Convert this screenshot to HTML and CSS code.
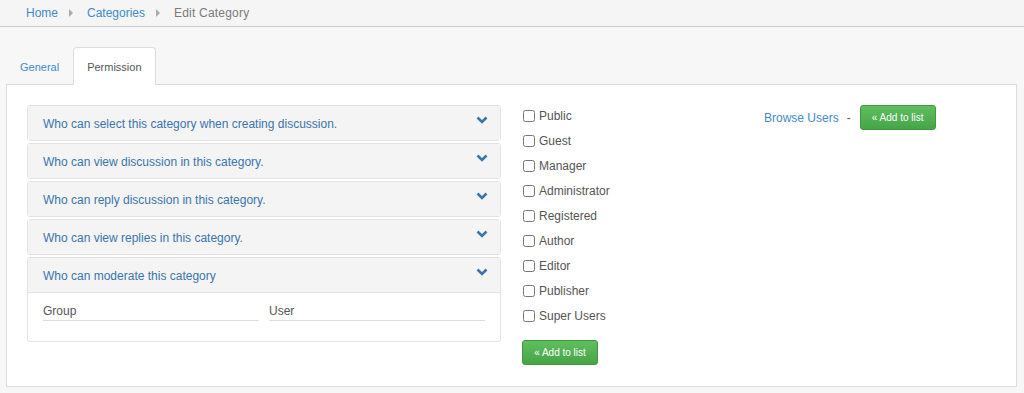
FILE: index.html
```html
<!DOCTYPE html>
<html lang="en">
<head>
    <meta charset="UTF-8">
    <title>Edit Category</title>
    <link rel="stylesheet" href="styles.css">
</head>
<body>
    <div class="breadcrumb">
        <a href="#">Home</a>
        <span class="crumb-arrow"></span>
        <a href="#">Categories</a>
        <span class="crumb-arrow"></span>
        <span class="current">Edit Category</span>
    </div>

    <div class="tabs">
        <a class="tab" href="#">General</a>
        <a class="tab active" href="#">Permission</a>
    </div>

    <div class="tab-panel">
        <div class="accordion">
            <div class="acc-item">
                <div class="acc-head">
                    <span>Who can select this category when creating discussion.</span>
                    <svg class="chevron" width="12" height="8" viewBox="0 0 12 8"><polyline points="1.5,1.5 6,6 10.5,1.5" fill="none" stroke="#3a75ae" stroke-width="2.6"/></svg>
                </div>
            </div>
            <div class="acc-item">
                <div class="acc-head">
                    <span>Who can view discussion in this category.</span>
                    <svg class="chevron" width="12" height="8" viewBox="0 0 12 8"><polyline points="1.5,1.5 6,6 10.5,1.5" fill="none" stroke="#3a75ae" stroke-width="2.6"/></svg>
                </div>
            </div>
            <div class="acc-item">
                <div class="acc-head">
                    <span>Who can reply discussion in this category.</span>
                    <svg class="chevron" width="12" height="8" viewBox="0 0 12 8"><polyline points="1.5,1.5 6,6 10.5,1.5" fill="none" stroke="#3a75ae" stroke-width="2.6"/></svg>
                </div>
            </div>
            <div class="acc-item">
                <div class="acc-head">
                    <span>Who can view replies in this category.</span>
                    <svg class="chevron" width="12" height="8" viewBox="0 0 12 8"><polyline points="1.5,1.5 6,6 10.5,1.5" fill="none" stroke="#3a75ae" stroke-width="2.6"/></svg>
                </div>
            </div>
            <div class="acc-item open">
                <div class="acc-head">
                    <span>Who can moderate this category</span>
                    <svg class="chevron" width="12" height="8" viewBox="0 0 12 8"><polyline points="1.5,1.5 6,6 10.5,1.5" fill="none" stroke="#3a75ae" stroke-width="2.6"/></svg>
                </div>
                <div class="acc-body">
                    <div class="field">Group</div>
                    <div class="field">User</div>
                </div>
            </div>
        </div>

        <div class="groups">
            <label class="check"><input type="checkbox"> Public</label>
            <label class="check"><input type="checkbox"> Guest</label>
            <label class="check"><input type="checkbox"> Manager</label>
            <label class="check"><input type="checkbox"> Administrator</label>
            <label class="check"><input type="checkbox"> Registered</label>
            <label class="check"><input type="checkbox"> Author</label>
            <label class="check"><input type="checkbox"> Editor</label>
            <label class="check"><input type="checkbox"> Publisher</label>
            <label class="check"><input type="checkbox"> Super Users</label>
            <button class="btn-add groups-btn">&laquo; Add to list</button>
        </div>

        <div class="users">
            <a href="#">Browse Users</a>
            <span class="dash">-</span>
            <button class="btn-add">&laquo; Add to list</button>
        </div>
    </div>
</body>
</html>
```

FILE: styles.css
```css
body {
    margin: 0;
    font-family: "Liberation Sans", Arial, sans-serif;
    font-size: 12px;
    color: #555;
    background-color: #f7f7f7;
}
a {
    color: #428bca;
    text-decoration: none;
}
.breadcrumb {
    height: 26px;
    border-bottom: 1px solid #ccc;
    padding-left: 26px;
    display: flex;
    align-items: center;
    background-color: #f5f5f5;
}
.breadcrumb .current {
    color: #7a7a7a;
    letter-spacing: 0.2px;
}
.crumb-arrow {
    width: 0;
    height: 0;
    border-top: 4px solid transparent;
    border-bottom: 4px solid transparent;
    border-left: 4px solid #aaa;
    margin: 0 14px 0 11px;
}
.tabs {
    display: flex;
    margin: 20px 0 -1px 6px;
}
.tab {
    display: block;
    padding: 0 13px 0 13px;
    height: 37px;
    line-height: 38px;
    font-size: 11px;
    border: 1px solid transparent;
    border-bottom: none;
    border-radius: 4px 4px 0 0;
}
.tab.active {
    background-color: #fff;
    border-color: #ddd;
    color: #555;
    position: relative;
    z-index: 1;
}
.tab-panel {
    margin: 0 7px 0 6px;
    background-color: #fff;
    border: 1px solid #ddd;
    padding: 20px 20px 21px;
    display: flex;
    align-items: flex-start;
}
.accordion {
    width: 474px;
    flex-shrink: 0;
}
.acc-item {
    border: 1px solid #e3e3e3;
    border-radius: 3px;
    margin-bottom: 2px;
    background-color: #fff;
}
.acc-head {
    height: 34px;
    background-color: #f4f4f4;
    display: flex;
    align-items: center;
    justify-content: space-between;
    padding: 0 12px 0 15px;
    color: #3a75ae;
}
.acc-head span {
    position: relative;
    top: 1px;
}
.chevron {
    margin-top: -6px;
}
.acc-item.open .acc-head {
    border-bottom: 1px solid #e3e3e3;
}
.acc-body {
    display: flex;
    gap: 10px;
    padding: 11px 15px 20px;
}
.field {
    flex: 1;
    border-bottom: 1px solid #ddd;
    padding-bottom: 2px;
    color: #555;
}
.groups {
    margin-left: 21px;
    width: 242px;
    display: flex;
    flex-direction: column;
    align-items: flex-start;
    margin-top: -2px;
}
.check {
    height: 25px;
    display: flex;
    align-items: center;
    color: #555;
}
.check input {
    width: 12px;
    height: 12px;
    margin: 0 4px 0 1px;
}
.btn-add {
    font-family: "Liberation Sans", Arial, sans-serif;
    font-size: 10px;
    color: #fff;
    width: 76px;
    height: 25px;
    border: 1px solid #3f9a3f;
    border-radius: 3px;
    background: linear-gradient(#5fbf5f, #46a446);
    padding: 0;
    cursor: pointer;
}
.groups-btn {
    margin-top: 12px;
}
.users {
    display: flex;
    align-items: center;
    margin-top: 0;
}
.dash {
    margin: 0 9px 0 8px;
    color: #555;
}
```
